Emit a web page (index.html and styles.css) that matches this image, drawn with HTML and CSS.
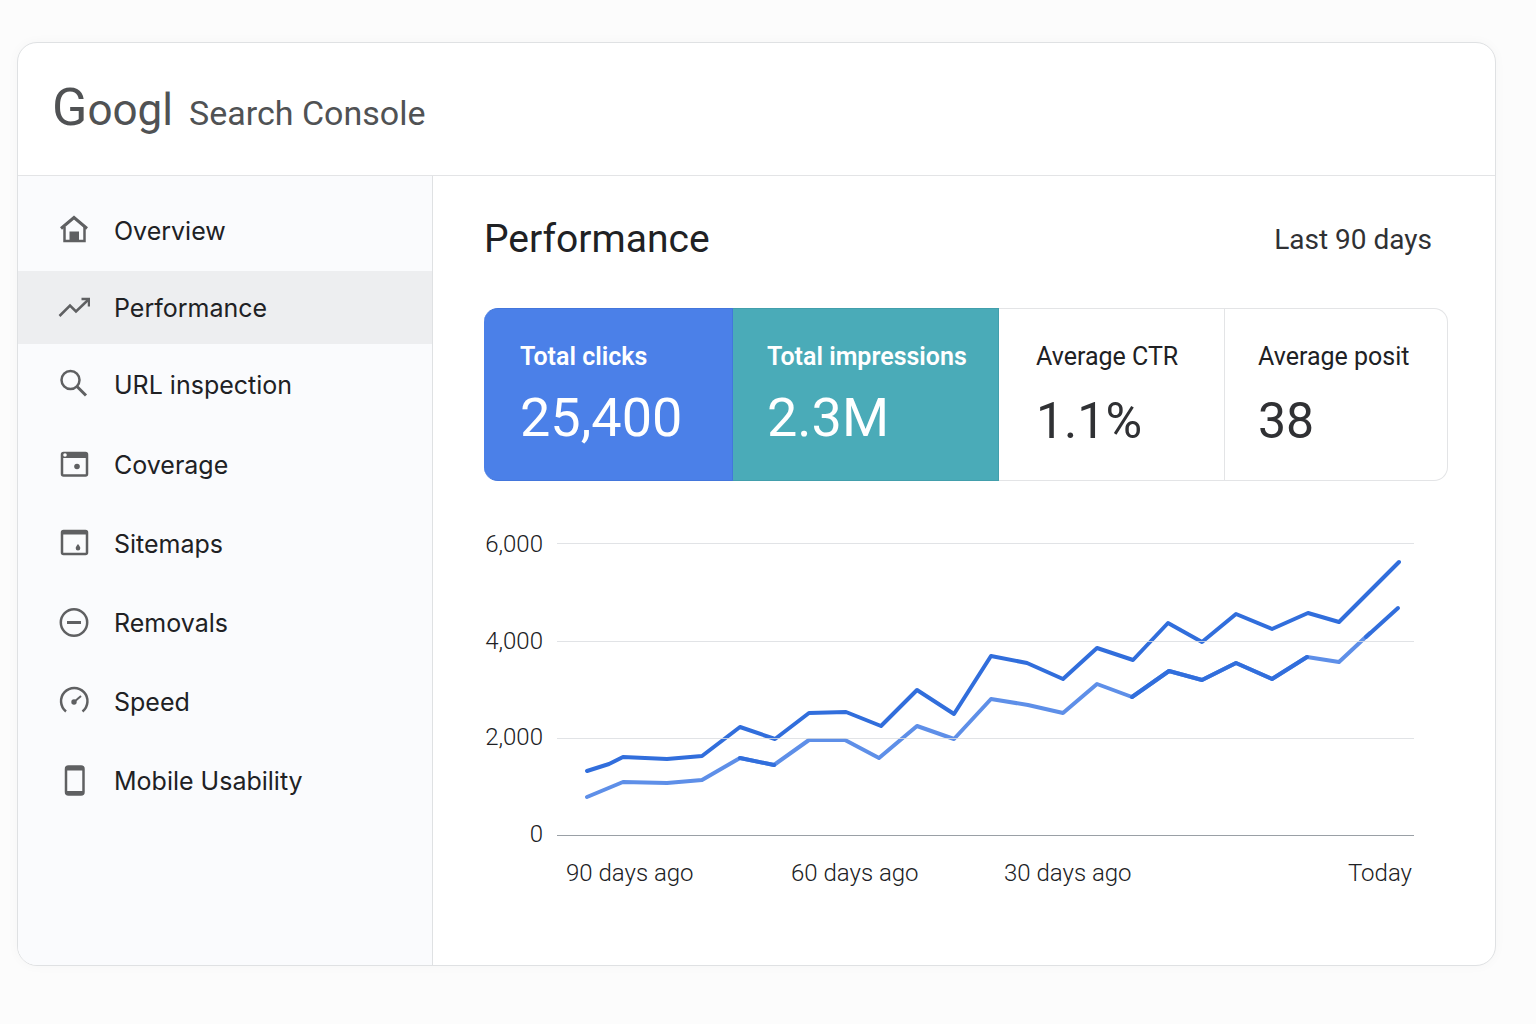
FILE: index.html
```html
<!DOCTYPE html>
<html lang="en">
<head>
    <meta charset="UTF-8">
    <meta name="viewport" content="width=device-width, initial-scale=1.0">
    <title>Search Console</title>
    <link rel="stylesheet" href="styles.css">
</head>
<body>
    <div class="console">
        <header class="topbar">
            <a href="#" class="brand">
                <span class="logo"><span class="logo-cap">G</span>oogl</span>
                <span class="product">Search Console</span>
            </a>
        </header>

        <div class="content">
            <nav class="sidebar">
                <ul class="nav-main">
                    <li><a href="#">
                        <svg class="icon" viewBox="0 0 32 32"><path d="M3 13.500L16 2.500l13 11" stroke-width="3"/><path d="M6.500 12v14h20V12"/><path class="fill" d="M11.500 16.500h9.500v9h-9.500z"/></svg>
                        Overview</a></li>
                    <li><a href="#" class="active">
                        <svg class="icon" viewBox="0 0 32 32"><path d="M1.500 24L12 13.500l6 6L30 8"/><path d="M23.500 7H31v7.500"/></svg>
                        Performance</a></li>
                    <li><a href="#">
                        <svg class="icon" viewBox="0 0 32 32"><circle cx="12.500" cy="11" r="9"/><path d="M19 17.500l9 9" stroke-width="3"/></svg>
                        URL inspection</a></li>
                </ul>
                <ul class="nav-more">
                    <li><a href="#">
                        <svg class="icon" viewBox="0 0 32 32"><rect x="4" y="4" width="25" height="22.500" rx="1.500"/><path class="fill" d="M4 4h25v5H4z"/><circle class="fill" cx="19" cy="17.500" r="2.800"/><circle class="dot" cx="7" cy="6" r="1.800"/></svg>
                        Coverage</a></li>
                    <li><a href="#">
                        <svg class="icon" viewBox="0 0 32 32"><rect x="4" y="3" width="25" height="23" rx="1.500"/><path class="fill" d="M4 3h25v3.500H4z"/><path class="fill" d="M20 16c1.500 2 2.300 3 2.300 4.200a2.300 2.300 0 0 1-4.600 0c0-1.200.8-2.200 2.300-4.200z"/></svg>
                        Sitemaps</a></li>
                    <li><a href="#">
                        <svg class="icon" viewBox="0 0 32 32"><circle cx="16" cy="15.500" r="13.200"/><path d="M9 15.500h14" stroke-width="3"/></svg>
                        Removals</a></li>
                    <li><a href="#">
                        <svg class="icon" viewBox="0 0 32 32"><path d="M8 25.500a13.200 13.200 0 1 1 16.500 0"/><circle class="fill" cx="16" cy="16" r="2.700"/><path d="M16 16l7-6" stroke-width="2"/></svg>
                        Speed</a></li>
                    <li><a href="#">
                        <svg class="icon" viewBox="0 0 32 32"><rect x="8" y="1.500" width="17.500" height="28" rx="2.500"/><path class="fill" d="M8 1.500h17.500v4H8zM8 26h17.500v3.500H8z"/></svg>
                        Mobile Usability</a></li>
                </ul>
            </nav>

            <main class="report">
                <div class="report-head">
                    <h1>Performance</h1>
                    <span class="range">Last 90 days</span>
                </div>

                <div class="metrics">
                    <div class="metric clicks">
                        <span class="metric-label">Total clicks</span>
                        <span class="metric-value">25,400</span>
                    </div>
                    <div class="metric impressions">
                        <span class="metric-label">Total impressions</span>
                        <span class="metric-value">2.3M</span>
                    </div>
                    <div class="metric ctr">
                        <span class="metric-label">Average CTR</span>
                        <span class="metric-value">1.1%</span>
                    </div>
                    <div class="metric position">
                        <span class="metric-label">Average posit</span>
                        <span class="metric-value">38</span>
                    </div>
                </div>

                <div class="chart">
                    <div class="y-axis">
                        <span>6,000</span>
                        <span>4,000</span>
                        <span>2,000</span>
                        <span>0</span>
                    </div>
                    <svg class="plot" viewBox="0 0 857 294">
                        <polyline class="line low" points="30,254 66,239 110,240 145,237 183,215 217,222 252,197 288,197 322,215 360,183 397,196 434,156 471,162 506,170 540,141 575,154 612,128 645,137 679,120 715,136 750,114 782,119 813,90"/>
                        <polyline class="line" points="183,215 217,222"/>
                        <polyline class="line" points="575,154 612,128 645,137 679,120 715,136 750,114"/>
                        <polyline class="line" points="809,94 841,65"/>
                        <polyline class="line" points="30,228 52,221 66,214 110,216 145,213 183,184 218,196 252,170 289,169 324,183 360,147 397,171 434,113 470,120 506,136 540,105 576,117 611,80 645,99 679,71 715,86 751,70 782,79 842,19"/>
                        <path class="grid" d="M0 .5h857M0 98.500h857M0 195.500h857"/>
                        <path class="base" d="M0 292.500h857"/>
                    </svg>
                    <div class="x-axis">
                        <span>90 days ago</span>
                        <span>60 days ago</span>
                        <span>30 days ago</span>
                        <span>Today</span>
                    </div>
                </div>
            </main>
        </div>
    </div>
</body>
</html>
```

FILE: styles.css
```css
*{
    box-sizing: border-box;
}
body{
    margin: 0;
    padding: 42px 40px 56px 17px;
    background-color: #fcfcfc;
    font-family: Roboto, "Liberation Sans", sans-serif;
    color: #202124;
}
a{
    color: inherit;
    text-decoration: none;
}
ul{
    list-style: none;
    margin: 0;
    padding: 0;
}
.console{
    background-color: #fff;
    border: 1px solid #dfe1e3;
    border-radius: 20px;
    overflow: hidden;
    box-shadow: 0 0 12px rgba(0, 0, 0, 0.03);
}
.topbar{
    display: flex;
    align-items: center;
    height: 133px;
    padding: 0 34px;
    border-bottom: 1px solid #e3e4e6;
}
.brand{
    display: flex;
    align-items: baseline;
    gap: 16px;
    color: #505254;
}
.logo{
    font-size: 44px;
    line-height: 56px;
}
.logo-cap{
    font-size: 52px;
}
.product{
    font-size: 34px;
}
.content{
    display: flex;
}
.sidebar{
    width: 415px;
    padding-top: 18px;
    background-color: #fafbfd;
    border-right: 1px solid #dfe1e3;
    font-family: Inter, Roboto, sans-serif;
}
.nav-main, .nav-more{
    display: flex;
    flex-direction: column;
    gap: 4px;
}
.nav-more{
    margin-top: 7px;
    gap: 6px;
}
.sidebar a{
    display: flex;
    align-items: center;
    gap: 24px;
    height: 73px;
    padding: 0 40px;
    font-size: 25px;
}
.sidebar a.active{
    background-color: #edeef0;
}
.icon{
    width: 32px;
    height: 32px;
    fill: none;
    stroke: #5f6062;
    stroke-width: 2.5;
}
.icon .fill{
    fill: #5f6062;
    stroke: none;
}
.icon .dot{
    fill: #fff;
    stroke: none;
}
.report{
    flex: 1;
    padding: 36px 47px 76px 51px;
}
.report-head{
    display: flex;
    justify-content: space-between;
    align-items: center;
    height: 54px;
    padding-right: 16px;
}
h1{
    margin: 0;
    font-size: 39px;
    font-weight: 400;
}
.range{
    font-size: 28px;
    color: #303134;
}
.metrics{
    display: grid;
    grid-template-columns: 249fr 266fr 226fr 223fr;
    height: 173px;
    margin-top: 42px;
}
.metric{
    display: flex;
    flex-direction: column;
    gap: 8px;
    padding: 31px 0 0 33px;
    border: 1px solid #e3e4e6;
    border-left: none;
    white-space: nowrap;
}
.metric-label{
    font-size: 25px;
    line-height: 34px;
}
.metric-value{
    font-size: 50px;
    line-height: 78px;
    color: #303134;
}
.clicks, .impressions{
    padding-left: 34px;
    color: #fff;
}
.clicks .metric-label, .impressions .metric-label{
    font-weight: 600;
}
.clicks .metric-value, .impressions .metric-value{
    font-size: 54px;
    line-height: 72px;
    color: #fff;
}
.clicks{
    padding-left: 36px;
    background-color: #4b80e8;
    border-color: #4376dc;
    border-radius: 14px 0 0 14px;
}
.impressions{
    background-color: #4aabb8;
    border-color: #429fac;
}
.ctr{
    padding-left: 37px;
}
.position{
    border-radius: 0 14px 14px 0;
}
.chart{
    display: grid;
    grid-template-columns: 59px 1fr;
    column-gap: 14px;
    margin-top: 62px;
    padding-right: 34px;
    font-size: 24px;
    font-weight: 300;
    color: #202124;
}
.y-axis{
    display: flex;
    flex-direction: column;
    justify-content: space-between;
    align-items: flex-end;
    margin: -14px 0 -12px;
    line-height: 30px;
}
.plot{
    display: block;
    width: 100%;
}
.line{
    fill: none;
    stroke: #316edc;
    stroke-width: 4;
    stroke-linecap: round;
    stroke-linejoin: round;
}
.line.low{
    stroke: #5e8fe8;
}
.grid{
    stroke: #dadce0;
    stroke-opacity: 0.8;
}
.base{
    stroke: #9aa0a6;
}
.x-axis{
    grid-column: 2;
    display: grid;
    grid-template-columns: 225fr 213fr 200fr 208fr;
    margin-top: 20px;
    padding: 0 2px 0 9px;
    line-height: 32px;
}
.x-axis span:last-child{
    text-align: right;
}
```
